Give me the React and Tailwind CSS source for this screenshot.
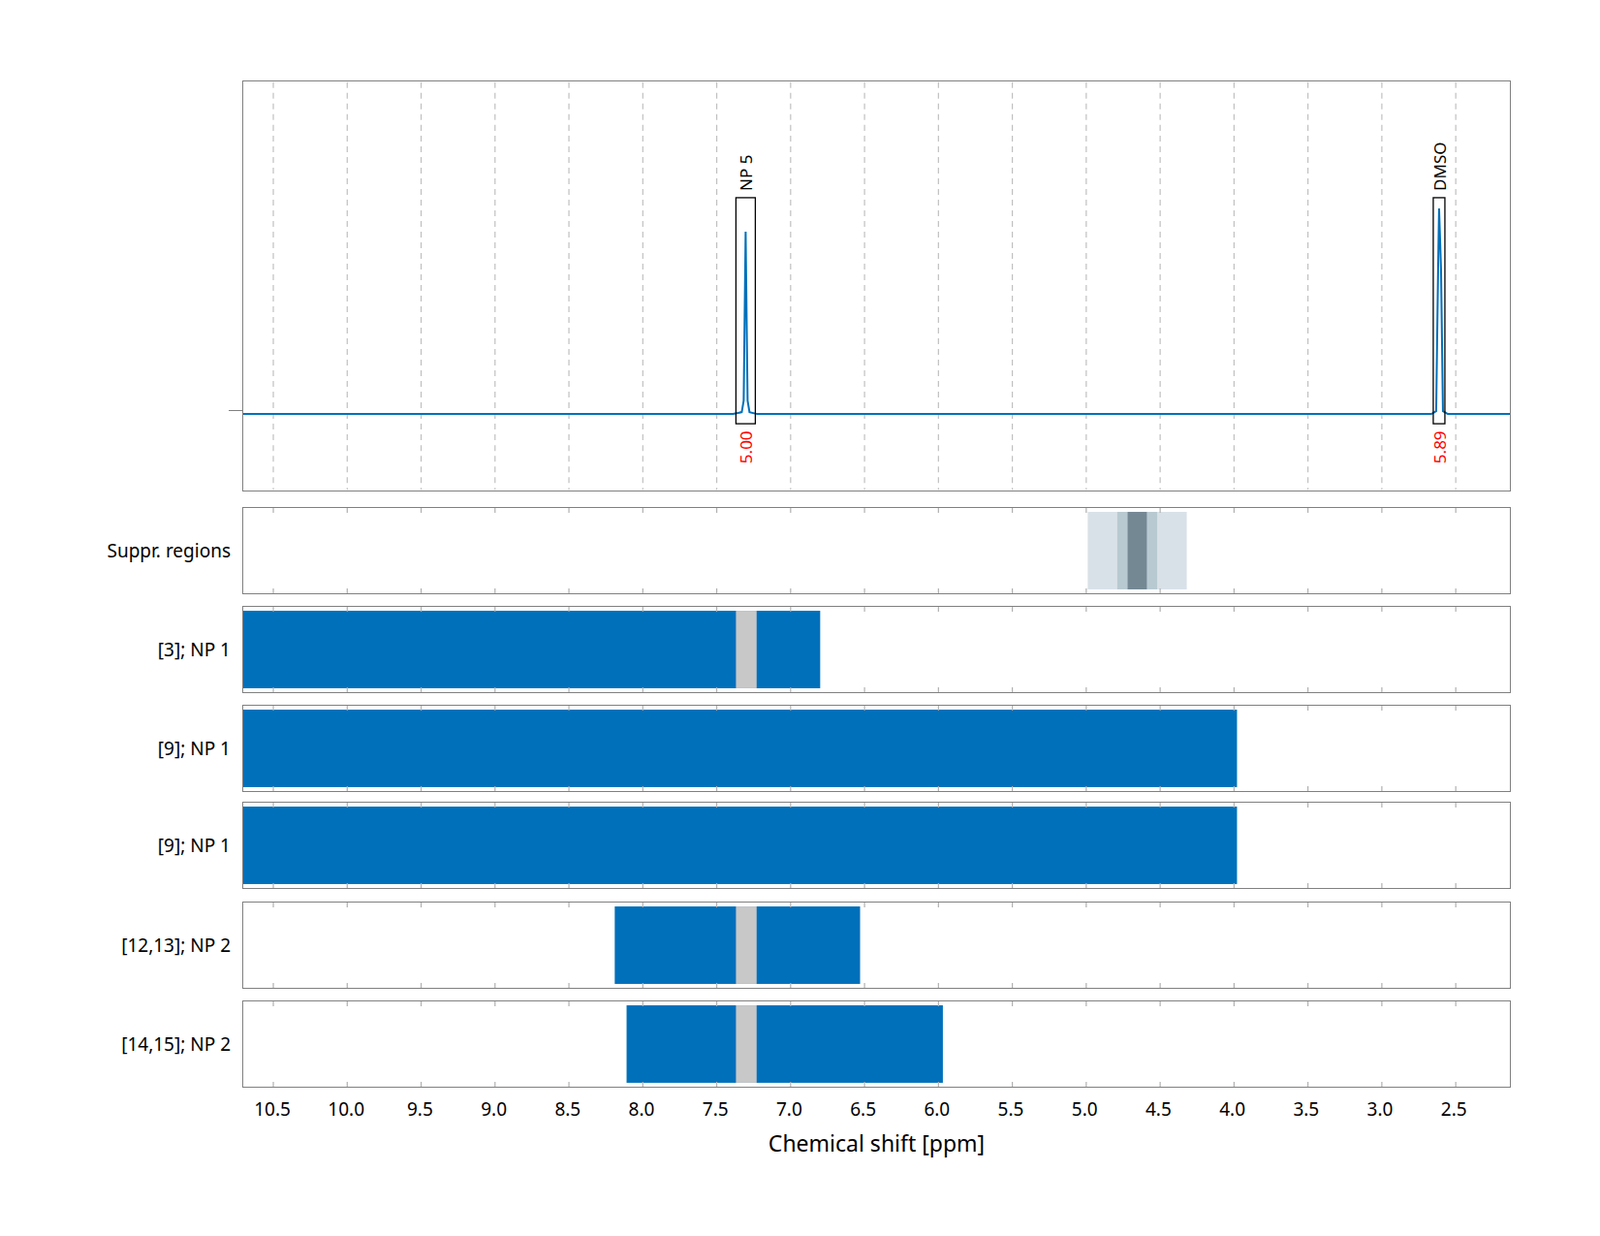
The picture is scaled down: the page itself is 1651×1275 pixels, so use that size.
import React from 'react';

const W = 1309;
const px = (ppm) => 31 + (10.5 - ppm) * 152.4;
const ticks = Array.from({ length: 17 }, (_, i) => 10.5 - i * 0.5);
const BLUE = '#0070bb';

function Ticks({ h }) {
  return ticks.map((t) => (
    <g key={t} stroke="#b0b0b0" strokeWidth="1.2">
      <line x1={px(t)} x2={px(t)} y1={0} y2={5} />
      <line x1={px(t)} x2={px(t)} y1={h - 5} y2={h} />
    </g>
  ));
}

function Panel({ label, h = 90, mt = 'mt-[12px]', children }) {
  return (
    <div className={`flex items-center ${mt}`}>
      <div className="w-[250px] pr-[12px] text-right text-[19px] text-black">{label}</div>
      <div className="border-[1.5px] border-[#808080] bg-white" style={{ width: W, height: h }}>
        <svg width="100%" height="100%" viewBox={`0 0 ${W - 3} ${h - 3}`} preserveAspectRatio="none">
          {children}
          <Ticks h={h - 3} />
        </svg>
      </div>
    </div>
  );
}

function Bar({ from, to, gap }) {
  return (
    <>
      <rect x={from} y={4} width={to - from} height={79} fill={BLUE} />
      {gap && <rect x={px(7.37)} y={4} width={px(7.23) - px(7.37)} height={79} fill="#c8c8c8" />}
    </>
  );
}

function Spectrum() {
  const base = 342;
  return (
    <svg width="100%" height="100%" viewBox={`0 0 ${W - 3} 420`}>
      {ticks.map((t) => (
        <line key={t} x1={px(t)} x2={px(t)} y1={0} y2={420} stroke="#c0c0c0" strokeWidth="1.2" strokeDasharray="6 5" />
      ))}
      <polyline
        points={`0,${base} 505,${base} 514,${base - 2} 516,${base - 14} 518,${base - 188} 520,${base - 14} 522,${base - 2} 530,${base} 1225,${base} 1230,${base - 3} 1232,${base - 150} 1233,${base - 212} 1235,${base - 150} 1237,${base - 3} 1242,${base} ${W},${base}`}
        fill="none" stroke={BLUE} strokeWidth="2"
      />
      <rect x={508} y={119} width={20} height={233} fill="none" stroke="#000" strokeWidth="1.3" />
      <rect x={1227} y={119} width={12} height={233} fill="none" stroke="#000" strokeWidth="1.3" />
      <text transform="translate(525,112) rotate(-90)" fontSize="17" fill="#000">NP 5</text>
      <text transform="translate(1240,112) rotate(-90)" fontSize="17" fill="#000">DMSO</text>
      <text transform="translate(525,393) rotate(-90)" fontSize="17" fill="#ff0000">5.00</text>
      <text transform="translate(1240,393) rotate(-90)" fontSize="17" fill="#ff0000">5.89</text>
    </svg>
  );
}

export default function App() {
  return (
    <div className="w-[1651px] h-[1275px] bg-white pt-[83px] font-['Liberation_Sans',Arial,sans-serif]">
      <div className="flex">
        <div className="w-[250px] relative">
          <div className="absolute right-0 top-[340px] w-[14px] border-t border-[#808080]" />
        </div>
        <div className="border-[1.5px] border-[#808080] h-[424px] overflow-hidden" style={{ width: W }}>
          <Spectrum />
        </div>
      </div>
      <Panel label="Suppr. regions" mt="mt-[16px]">
        <rect x={px(4.99)} y={4} width={px(4.32) - px(4.99)} height={79} fill="#d9e1e8" />
        <rect x={px(4.79)} y={4} width={px(4.52) - px(4.79)} height={79} fill="#b8c9d1" />
        <rect x={px(4.72)} y={4} width={px(4.59) - px(4.72)} height={79} fill="#748894" />
      </Panel>
      <Panel label="[3]; NP 1"><Bar from={0} to={px(6.8)} gap /></Panel>
      <Panel label="[9]; NP 1"><Bar from={0} to={px(3.98)} /></Panel>
      <Panel label="[9]; NP 1" mt="mt-[10px]"><Bar from={0} to={px(3.98)} /></Panel>
      <Panel label="[12,13]; NP 2" mt="mt-[13px]"><Bar from={px(8.19)} to={px(6.53)} gap /></Panel>
      <Panel label="[14,15]; NP 2"><Bar from={px(8.11)} to={px(5.97)} gap /></Panel>
      <div className="flex">
        <div className="w-[250px]" />
        <div className="relative h-[40px]" style={{ width: W }}>
          {ticks.map((t) => (
            <span key={t} className="absolute top-[8px] -translate-x-1/2 text-[19px] text-black" style={{ left: px(t) }}>
              {t.toFixed(1)}
            </span>
          ))}
        </div>
      </div>
      <div className="flex">
        <div className="w-[250px]" />
        <div className="text-center text-[23px] text-black" style={{ width: W }}>Chemical shift [ppm]</div>
      </div>
    </div>
  );
}
